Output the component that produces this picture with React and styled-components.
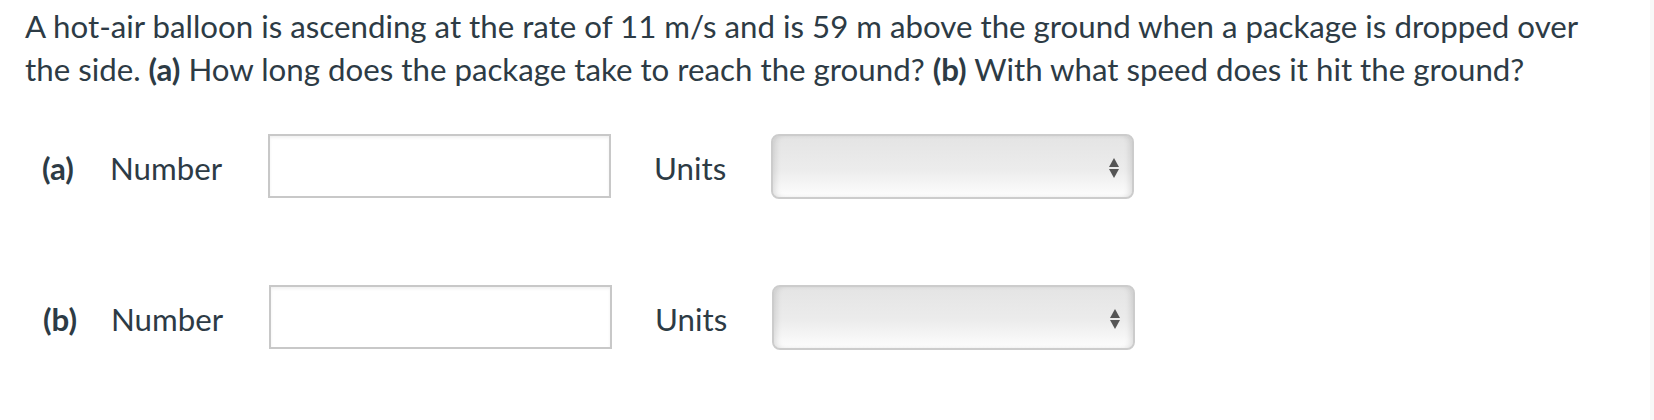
import React from "react";
import styled, { createGlobalStyle } from "styled-components";

const Global = createGlobalStyle`
  html, body { margin: 0; padding: 0; background: #fff; }
  body { font-family: Lato, "Open Sans", sans-serif; color: #2d3b45; }
`;

const Page = styled.div`
  display: flex;
  width: 1654px;
  height: 420px;
  overflow: hidden;
`;

const Main = styled.div`
  flex: 1;
  padding: 5px 0 0 25px;
`;

const Edge = styled.div`
  width: 4px;
  background: #f8f8f8;
`;

const Question = styled.p`
  margin: 0;
  width: 1592px;
  font-size: 31.25px;
  line-height: 43px;
  b { font-weight: 700; }
`;

const Parts = styled.div`
  display: flex;
  flex-direction: column;
  gap: 87px;
  margin-top: 43px;
`;

const Row = styled.div`
  display: flex;
  align-items: center;
  height: 64px;
  padding-left: ${(p) => p.$shift || 0}px;
  font-size: 31.25px;
`;

const Text = styled.span`
  padding-top: 3px;
`;

const PartLabel = styled(Text)`
  width: 68px;
  margin-left: 17px;
  font-weight: 700;
`;

const FieldLabel = styled(Text)`
  width: 158px;
`;

const NumberInput = styled.input`
  box-sizing: border-box;
  width: 343px;
  height: 64px;
  border: 2px solid #c8c8c8;
  box-shadow: inset 0 2px 3px rgba(0, 0, 0, 0.06);
  font: inherit;
  font-size: 26px;
  padding: 0 10px;
  outline: none;
`;

const UnitsLabel = styled(Text)`
  width: 117px;
  margin-left: 43px;
`;

const SelectBox = styled.div`
  position: relative;
  box-sizing: border-box;
  width: 363px;
  height: 65px;
  border: 2px solid #cccccc;
  border-radius: 8px;
  background: linear-gradient(#e4e4e4, #ececec 55%, #fdfdfd);
  box-shadow: inset 5px 0 6px -3px rgba(0, 0, 0, 0.12),
    inset -5px 0 6px -3px rgba(0, 0, 0, 0.12);
`;

const Arrows = styled.svg`
  position: absolute;
  right: 12px;
  top: 21px;
`;

const Part = ({ letter, shift }) => (
  <Row $shift={shift}>
    <PartLabel>({letter})</PartLabel>
    <FieldLabel>Number</FieldLabel>
    <NumberInput type="text" />
    <UnitsLabel>Units</UnitsLabel>
    <SelectBox>
      <Arrows width="12" height="22" viewBox="0 0 12 22">
        <polygon points="6,1 11,10 1,10" fill="#555" />
        <polygon points="1,12 11,12 6,21" fill="#555" />
      </Arrows>
    </SelectBox>
  </Row>
);

export default function App() {
  return (
    <>
      <Global />
      <Page>
        <Main>
          <Question>
            A hot-air balloon is ascending at the rate of 11 m/s and is 59 m
            above the ground when a package is dropped over the side.{" "}
            <b>(a)</b> How long does the package take to reach the ground?{" "}
            <b>(b)</b> With what speed does it hit the ground?
          </Question>
          <Parts>
            <Part letter="a" />
            <Part letter="b" shift={1} />
          </Parts>
        </Main>
        <Edge />
      </Page>
    </>
  );
}
